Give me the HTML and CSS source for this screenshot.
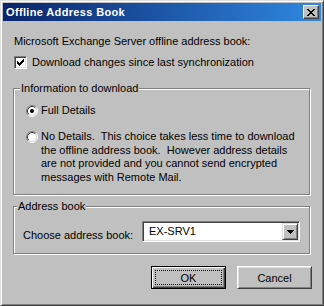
FILE: index.html
```html
<!DOCTYPE html>
<html lang="en">
<head>
    <meta charset="UTF-8">
    <title>Offline Address Book</title>
    <link rel="stylesheet" href="styles.css">
</head>
<body>
    <div class="window">
        <div class="titlebar">
            <span class="title">Offline Address Book</span>
            <span class="close-btn">
                <svg width="8" height="7" viewBox="0 0 8 7">
                    <path d="M0 0h2v1h1v1h2v-1h1v-1h2v1h-1v1h-1v1h-1v1h1v1h1v1h1v1h-2v-1h-1v-1h-2v1h-1v1h-2v-1h1v-1h1v-1h1v-1h-1v-1h-1v-1h-1z" fill="#000"/>
                </svg>
            </span>
        </div>

        <div class="content">
            <p class="intro">Microsoft Exchange Server offline address book:</p>

            <div class="check-row">
                <span class="checkbox">
                    <svg width="7" height="7" viewBox="0 0 7 7">
                        <path d="M6 0h1v3h-1v1h-1v1h-1v1h-1v1h-1v-1h-1v-1h-1v-3h1v1h1v1h1v-1h1v-1h1v-1h1z" fill="#000"/>
                    </svg>
                </span>
                <span>Download changes since last synchronization</span>
            </div>

            <fieldset class="group group-info">
                <legend>Information to download</legend>
                <div class="option">
                    <svg class="radio" width="12" height="12" viewBox="0 0 12 12">
                        <circle cx="6" cy="6" r="4.5" fill="#fff"/>
                        <path d="M2.11 9.89A5.5 5.5 0 0 1 9.89 2.11" fill="none" stroke="#808080"/>
                        <path d="M9.89 2.11A5.5 5.5 0 0 1 2.11 9.89" fill="none" stroke="#fff"/>
                        <path d="M2.82 9.18A4.5 4.5 0 0 1 9.18 2.82" fill="none" stroke="#404040"/>
                        <path d="M9.18 2.82A4.5 4.5 0 0 1 2.82 9.18" fill="none" stroke="#dfdfdf"/>
                        <circle cx="6" cy="6" r="2" fill="#000"/>
                    </svg>
                    <span>Full Details</span>
                </div>
                <div class="option option-long">
                    <svg class="radio" width="12" height="12" viewBox="0 0 12 12">
                        <circle cx="6" cy="6" r="4.5" fill="#fff"/>
                        <path d="M2.11 9.89A5.5 5.5 0 0 1 9.89 2.11" fill="none" stroke="#808080"/>
                        <path d="M9.89 2.11A5.5 5.5 0 0 1 2.11 9.89" fill="none" stroke="#fff"/>
                        <path d="M2.82 9.18A4.5 4.5 0 0 1 9.18 2.82" fill="none" stroke="#404040"/>
                        <path d="M9.18 2.82A4.5 4.5 0 0 1 2.82 9.18" fill="none" stroke="#dfdfdf"/>
                    </svg>
                    <span class="option-text">No Details.&nbsp; This choice takes less time to download<br>the offline address book.&nbsp; However address details<br>are not provided and you cannot send encrypted<br>messages with Remote Mail.</span>
                </div>
            </fieldset>

            <fieldset class="group group-book">
                <legend>Address book</legend>
                <div class="book-row">
                    <span class="book-label">Choose address book:</span>
                    <div class="combo">
                        <span class="combo-value">EX-SRV1</span>
                        <span class="combo-btn">
                            <svg width="7" height="4" viewBox="0 0 7 4">
                                <path d="M0 0h7v1h-1v1h-1v1h-1v1h-1v-1h-1v-1h-1v-1h-1z" fill="#000"/>
                            </svg>
                        </span>
                    </div>
                </div>
            </fieldset>

            <div class="buttons">
                <button class="btn btn-default"><span class="focus">OK</span></button>
                <button class="btn">Cancel</button>
            </div>
        </div>
    </div>
</body>
</html>
```

FILE: styles.css
```css
body {
    margin: 0;
    font-family: 'Liberation Sans', Arial, sans-serif;
    font-size: 11px;
    color: #000;
    background: #c0c0c0;
}
.window {
    width: 324px;
    height: 306px;
    box-sizing: border-box;
    background: #c0c0c0;
    border: 1px solid;
    border-color: #dfdfdf #404040 #404040 #dfdfdf;
    box-shadow: inset 1px 1px 0 #fff, inset -1px -1px 0 #808080;
    padding: 2px;
}
.titlebar {
    height: 18px;
    display: flex;
    align-items: center;
    justify-content: space-between;
    padding: 0 2px 0 3px;
    background: linear-gradient(to right, #0a246a, #2f88e2);
}
.title {
    color: #fff;
    font-weight: 700;
    font-size: 11px;
    letter-spacing: 0.35px;
}
.close-btn {
    width: 16px;
    height: 14px;
    box-sizing: border-box;
    display: flex;
    align-items: center;
    justify-content: center;
    background: #c0c0c0;
    border: 1px solid;
    border-color: #fff #404040 #404040 #fff;
    box-shadow: inset -1px -1px 0 #808080;
}
.content {
    padding: 14px 10px 0;
}
.intro {
    margin: 0;
    padding-left: 1px;
    line-height: 13px;
}
.check-row {
    display: flex;
    align-items: center;
    margin-top: 8px;
    padding-left: 1px;
    line-height: 13px;
}
.checkbox {
    width: 13px;
    height: 13px;
    box-sizing: border-box;
    display: flex;
    align-items: center;
    justify-content: center;
    margin-right: 5px;
    background: #fff;
    border: 1px solid;
    border-color: #808080 #fff #fff #808080;
    box-shadow: inset 1px 1px 0 #404040, inset -1px -1px 0 #dfdfdf;
}
.group {
    margin: 0 1px 0 0;
    border: 1px solid #808080;
    box-shadow: 1px 1px 0 #fff, inset 1px 1px 0 #fff;
    min-width: 0;
}
.group legend {
    padding: 0 1px;
    margin-left: -6px;
    line-height: 13px;
    background: #c0c0c0;
}
.group-info {
    margin-top: 13px;
    padding: 9px 8px 10px 12px;
}
.group-book {
    margin-top: 5px;
    padding: 8px 9px 11px 9px;
}
.option {
    display: flex;
    align-items: center;
    line-height: 13px;
}
.option .radio {
    flex: none;
    margin-right: 3px;
}
.option-long {
    align-items: flex-start;
    margin-top: 13px;
}
.option-long .radio {
    margin-top: 1px;
}
.option-text {
    line-height: 13.5px;
    white-space: nowrap;
}
.book-row {
    display: flex;
    justify-content: space-between;
    align-items: flex-start;
}
.book-label {
    margin-top: 8px;
    line-height: 13px;
}
.combo {
    width: 158px;
    height: 21px;
    box-sizing: border-box;
    display: flex;
    align-items: center;
    justify-content: space-between;
    background: #fff;
    border: 1px solid;
    border-color: #808080 #fff #fff #808080;
    box-shadow: inset 1px 1px 0 #404040, inset -1px -1px 0 #dfdfdf;
    padding: 1px 1px 1px 6px;
}
.combo-value {
    line-height: 13px;
}
.combo-btn {
    width: 16px;
    height: 17px;
    box-sizing: border-box;
    display: flex;
    align-items: center;
    justify-content: center;
    background: #c0c0c0;
    border: 1px solid;
    border-color: #dfdfdf #404040 #404040 #dfdfdf;
    box-shadow: inset 1px 1px 0 #fff, inset -1px -1px 0 #808080;
}
.buttons {
    display: flex;
    justify-content: flex-end;
    gap: 11px;
    margin: 12px -1px 0 0;
}
.btn {
    width: 75px;
    height: 23px;
    box-sizing: border-box;
    padding: 0;
    font-family: inherit;
    font-size: 11px;
    color: #000;
    background: #c0c0c0;
    border: 1px solid;
    border-color: #fff #404040 #404040 #fff;
    box-shadow: inset 1px 1px 0 #dfdfdf, inset -1px -1px 0 #808080;
}
.btn-default {
    border: 1px solid #000;
    box-shadow: inset 1px 1px 0 #fff, inset -1px -1px 0 #404040, inset -2px -2px 0 #808080;
    padding: 3px;
}
.btn-default .focus {
    display: flex;
    align-items: center;
    justify-content: center;
    height: 100%;
    box-sizing: border-box;
    border: 1px dotted #000;
}
```
